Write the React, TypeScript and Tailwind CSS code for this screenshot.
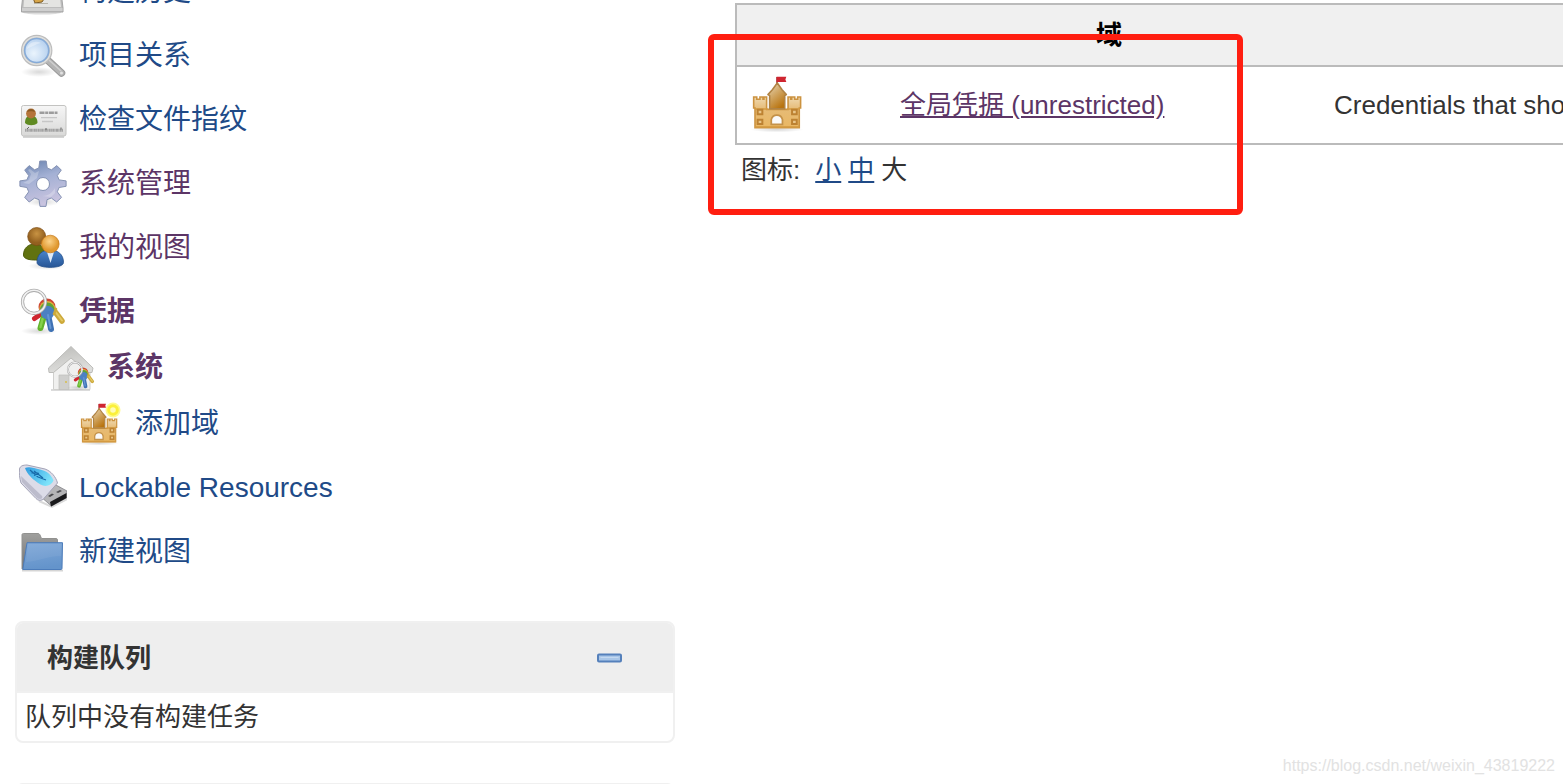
import type { ReactNode } from "react";

type Task = {
    id: number;
    title: string;
    icon: ReactNode;
    visited?: boolean;
    active?: boolean;
    children?: Task[];
};

function HistoryIcon() {
    return (
        <svg viewBox="0 0 48 48" className="h-12 w-12 shrink-0" aria-hidden="true">
            <ellipse cx="23" cy="44.500" rx="19" ry="2" fill="#dcdcdc" />
            <path d="M6 8h34l4 32v4H2.500v-4z" fill="#bdbdbd" stroke="#a5a5a5" />
            <path d="M7 10h32l3 29H4.500z" fill="#e4e4e2" />
            <path d="M3 41.500h40.500" stroke="#cfcfcf" strokeWidth="3" />
            <path d="M14 30l14-12 3 4-8 12-7 1z" fill="#d8a649" stroke="#7b5a25" />
            <path d="M15 35.500h14" stroke="#b7b4a9" />
        </svg>
    );
}

function SearchIcon() {
    return (
        <svg viewBox="0 0 48 48" className="h-12 w-12 shrink-0" aria-hidden="true">
            <defs>
                <radialGradient id="lens" cx="0.4" cy="0.6" r="0.65">
                    <stop offset="0" stopColor="#eaf4fd" />
                    <stop offset="1" stopColor="#aecbec" />
                </radialGradient>
                <radialGradient id="softShadow">
                    <stop offset="0" stopColor="#000" stopOpacity="0.150" />
                    <stop offset="1" stopColor="#000" stopOpacity="0" />
                </radialGradient>
            </defs>
            <ellipse cx="20" cy="40" rx="18" ry="5" fill="url(#softShadow)" />
            <path d="M29 28.500l13.500 12.500" stroke="#9a9a9a" strokeWidth="7.500" strokeLinecap="round" />
            <path d="M29 28.500l13.500 12.500" stroke="#b4b4b4" strokeWidth="5.500" strokeLinecap="round" />
            <path d="M30 28l12 11" stroke="#cfcfcf" strokeWidth="1.500" />
            <circle cx="42.500" cy="41" r="1.500" fill="#e2e2e2" />
            <circle cx="17.700" cy="18.500" r="14" fill="url(#lens)" stroke="#bdbdbd" strokeWidth="3.500" />
            <circle cx="17.700" cy="18.500" r="13.800" fill="none" stroke="#e0e0de" strokeWidth="1.500" />
            <circle cx="17.700" cy="18.500" r="12" fill="none" stroke="#86abd8" strokeWidth="1.600" />
            <path d="M8 17c1-6 8-9 14-6-5 1-10 4-14 6z" fill="#fff" opacity="0.350" />
        </svg>
    );
}

function CardIcon() {
    return (
        <svg viewBox="0 0 48 48" className="h-12 w-12 shrink-0" aria-hidden="true">
            <defs>
                <linearGradient id="card" x2="0" y2="1">
                    <stop offset="0" stopColor="#f6f6f6" />
                    <stop offset="1" stopColor="#d9d9d8" />
                </linearGradient>
            </defs>
            <path d="M4 41h41" stroke="#d5d5d5" strokeWidth="2" />
            <rect x="2.500" y="9.500" width="44.500" height="30.500" rx="2" fill="url(#card)" stroke="#c3c3c1" />
            <path d="M6 27c0-6 3-7.500 6-7.500s6.500 1.500 6.500 7.500c-3 3-9.500 3-12.500 0z" fill="#5f8a22" />
            <circle cx="12" cy="17.500" r="4.900" fill="#b5743a" />
            <path d="M8 16c1-4 7-4 8 0-2-1-6-1-8 0z" fill="#8a5a24" />
            <path d="M20.500 16.700h18" stroke="#9c9c9c" strokeWidth="2.400" strokeDasharray="5 0.700 3 0.700" />
            <path d="M22 21.700h16M23 25.500h11" stroke="#c6c6c6" strokeWidth="1.300" />
            <path d="M6 34.300h38" stroke="#a2a2a2" strokeWidth="3" strokeDasharray="1 0.400 2 0.300" />
            <path d="M8 33l2-2M27 32v2M42 31.500v2" stroke="#666" />
        </svg>
    );
}

function GearIcon() {
    return (
        <svg viewBox="0 0 48 48" className="h-12 w-12 shrink-0" aria-hidden="true">
            <defs>
                <linearGradient id="gear" x2="0.300" y2="1">
                    <stop offset="0" stopColor="#6680ac" />
                    <stop offset="0.450" stopColor="#a3b0d4" />
                    <stop offset="1" stopColor="#c8c3df" />
                </linearGradient>
            </defs>
            <ellipse cx="24" cy="42" rx="17" ry="4.500" fill="url(#softShadow)" />
            <path
                fillRule="evenodd"
                fill="url(#gear)"
                stroke="#8592b3"
                strokeLinejoin="round"
                d="M20.800 1h6.400l1 7 4.300 1.800 5.300-4.200 4.500 4.500-4 5.500 1.800 4.300 7 1v5.400l-7 1.200-1.800 4.300 4.200 5.600-4.800 4.600-5.400-4-4.300 1.700-1 6.700h-6l-1-6.700-4.300-1.700-5.500 4-4.500-4.600 4-5.600-1.800-4.300-7-1.200v-5.400l7-1 1.800-4.300-4-5.500L10.200 5.600l5.300 4.200L19.800 8zM24 17.500a6.500 6.500 0 1 0 0 13 6.500 6.500 0 0 0 0-13z"
            />
            <path d="M11 9l5 4 4-2-2 7-8 6-6-1 6-3 2-6-3-4zM36 28c-3 5-7 8-13 8l9 1 4-4z" fill="#fff" opacity="0.250" />
        </svg>
    );
}

function UsersIcon() {
    return (
        <svg viewBox="0 0 48 48" className="h-12 w-12 shrink-0" aria-hidden="true">
            <defs>
                <radialGradient id="brownHead" cx="0.500" cy="0.350">
                    <stop offset="0" stopColor="#c89343" />
                    <stop offset="1" stopColor="#93601f" />
                </radialGradient>
                <radialGradient id="orangeHead" cx="0.450" cy="0.350">
                    <stop offset="0" stopColor="#fbd38a" />
                    <stop offset="1" stopColor="#e0982f" />
                </radialGradient>
                <linearGradient id="blueBody" x2="0" y2="1">
                    <stop offset="0" stopColor="#4a86cd" />
                    <stop offset="1" stopColor="#275595" />
                </linearGradient>
            </defs>
            <ellipse cx="28" cy="42" rx="19" ry="4" fill="url(#softShadow)" />
            <path d="M4.500 31c0-7 5-11 11-11s12 4 12 11-5 5-11 5-12-1-12-5z" fill="#61720f" stroke="#4d5c0b" />
            <circle cx="17.700" cy="12.500" r="9" fill="url(#brownHead)" stroke="#7c4a11" strokeWidth="0.700" />
            <path d="M18 38.500c0-8 5-12.500 13-12.500S44.500 30.500 44.500 38.500c0 6.500-26.500 6.500-26.500 0z" fill="url(#blueBody)" stroke="#24508c" strokeWidth="0.800" />
            <path d="M28 28h7l-3.500 11z" fill="#dfeaf6" />
            <circle cx="31.300" cy="20" r="8.800" fill="url(#orangeHead)" stroke="#c47613" strokeWidth="0.700" />
        </svg>
    );
}

function KeyRing() {
    return (
        <g strokeLinecap="round" fill="none">
            <ellipse cx="20" cy="43" rx="18" ry="4" fill="url(#softShadow)" />
            <path d="M34 21l9 12" stroke="#cda93a" strokeWidth="5.500" />
            <path d="M35 22l8 10.500" stroke="#e3c763" strokeWidth="2" />
            <path d="M22 26l-6.500 4.500" stroke="#cf2630" strokeWidth="5" />
            <path d="M25 28l-3.500 12" stroke="#63b32b" strokeWidth="6" />
            <path d="M23.500 31l-2 8" stroke="#86d14b" strokeWidth="2.500" />
            <path d="M28.500 24l3.500 17" stroke="#3f72b4" strokeWidth="6" />
            <circle cx="28" cy="19" r="8.500" fill="#cd4634" />
            <circle cx="28.300" cy="21" r="8" fill="#dfb03c" />
            <circle cx="28.300" cy="22" r="7.500" fill="#5da336" />
            <circle cx="28.500" cy="24.500" r="6.800" fill="#4c80c2" />
            <path d="M29 27l2.500 13" stroke="#6596d3" strokeWidth="2" />
            <path d="M37 21l-2 5" stroke="#cda93a" strokeWidth="2.500" />
            <circle cx="15" cy="13.800" r="11.500" stroke="#aaaaaa" strokeWidth="3.200" />
            <circle cx="15" cy="13.800" r="11.500" stroke="#f1f1f1" strokeWidth="1.600" />
        </g>
    );
}

function KeysIcon() {
    return (
        <svg viewBox="0 0 48 48" className="h-12 w-12 shrink-0" aria-hidden="true">
            <KeyRing />
        </svg>
    );
}

function HouseIcon() {
    return (
        <svg viewBox="0 0 48 48" className="h-12 w-12 shrink-0" aria-hidden="true">
            <defs>
                <linearGradient id="roof" x2="0.300" y2="1">
                    <stop offset="0" stopColor="#bcbcb9" />
                    <stop offset="1" stopColor="#dededc" />
                </linearGradient>
            </defs>
            <path d="M4 46h39" stroke="#cfcfcf" strokeWidth="1.500" />
            <path d="M6.500 23L24 8l19 16v21.500H6.500z" fill="#f0f0ef" stroke="#d0d0ce" />
            <path d="M12 31h10v14.500H12z" fill="#cfcfcd" stroke="#bdbdbb" strokeWidth="0.700" />
            <path d="M24 2.500L46 24l-1 4.500h-4L24 14 6.500 28.500H2L1.500 24z" fill="url(#roof)" stroke="#bdbdba" strokeLinejoin="round" />
            <circle cx="19" cy="38" r="0.900" fill="#d8bd3c" />
            <g transform="translate(18.700 17) scale(0.620)">
                <KeyRing />
            </g>
        </svg>
    );
}

function Castle() {
    return (
        <g>
            <defs>
                <linearGradient id="keep" x2="0.600" y2="1">
                    <stop offset="0" stopColor="#e9dcc0" />
                    <stop offset="0.450" stopColor="#d3ab6c" />
                    <stop offset="1" stopColor="#b9740f" />
                </linearGradient>
                <linearGradient id="wall" x2="0" y2="1">
                    <stop offset="0" stopColor="#efd9b0" />
                    <stop offset="0.400" stopColor="#e6bb76" />
                    <stop offset="1" stopColor="#eab762" />
                </linearGradient>
            </defs>
            <ellipse cx="24" cy="42.500" rx="20" ry="2" fill="url(#softShadow)" />
            <path d="M24 9V3" stroke="#8e1b1b" />
            <path d="M23.700 2.800h7.300l-.7 2 .7 2h-7.300z" fill="#cf2530" />
            <path d="M6.500 18h2.300v1.700h2.400V18h2.300v1.700h.7V18h2v9.300h16.100V18h2v1.700H35V18h2.300v1.700h2.200V18h2.200v8.300h-1V41H7.500V26.300h-1z" fill="url(#wall)" stroke="#cc9340" strokeWidth="1.200" />
            <path d="M18.500 26.800V17l-1.300-.8 3.300-3.700L24.200 7.500l3.600 5 3.200 3.700-1.200.8v9.800z" fill="url(#keep)" stroke="#b08344" strokeWidth="1.200" strokeLinejoin="round" />
            <path d="M7.500 27h9.500M31.500 27H41M7.500 40.500h33.300" stroke="#d49a42" strokeWidth="1.300" />
            <path d="M19.700 38.500V35c1-4.500 7.400-4.500 8.400 0v3.500z" fill="#fafafa" stroke="#c4924a" strokeWidth="1.300" />
            <g fill="#e9c68a" stroke="#bd8232" strokeWidth="1.500">
                <path d="M9.500 27.600h3.500v3.300H9.500zM35.300 27.600h3.500v3.300h-3.500zM9.500 35h3.500v3.300H9.500zM35.300 35h3.500v3.300h-3.500z" />
            </g>
        </g>
    );
}

function CastleIcon() {
    return (
        <svg viewBox="0 0 48 48" className="h-16 w-16" aria-hidden="true">
            <Castle />
        </svg>
    );
}

function AddCastleIcon() {
    return (
        <svg viewBox="0 0 48 48" className="h-12 w-12 shrink-0" aria-hidden="true">
            <g transform="translate(0 1)">
                <Castle />
            </g>
            <circle cx="38" cy="10" r="7.500" fill="#fdf535" opacity="0.550" />
            <circle cx="38" cy="10" r="4.300" fill="#fffcb4" stroke="#fbf03a" strokeWidth="3" />
        </svg>
    );
}

function UsbIcon() {
    return (
        <svg viewBox="0 0 48 48" className="h-12 w-12 shrink-0" aria-hidden="true">
            <defs>
                <linearGradient id="label" x2="1" y2="0.500">
                    <stop offset="0" stopColor="#2d9adf" />
                    <stop offset="1" stopColor="#7ee3fa" />
                </linearGradient>
            </defs>
            <path d="M20 37l13 6 15-8" stroke="#000" strokeOpacity="0.150" strokeWidth="2" fill="none" />
            <path d="M22 33l15-12 11 6v6.500L32.500 42z" fill="#b4b4b6" stroke="#77777c" strokeWidth="0.700" />
            <path d="M31 38l16.500-9V34L32 42.500z" fill="#19191b" />
            <path d="M29 32l4-2.500 2 1-4 2.500zM37 28l4-2 2 1-4 2z" fill="#4b4b4f" />
            <path d="M0.500 5C1 2 4 1 8 1l18 4c6 2 11 8 12.500 14L24 35.500c-3 1.500-5 1-7-1L2 19C0.500 14 0 9 0.500 5z" fill="#dcdce8" stroke="#a3a3b7" />
            <path d="M2 12l21 20c1 1 0 3-2 3-2 0-3-1-4-2L3 18z" fill="#aeaec1" opacity="0.700" />
            <path d="M6 4c4-2 9 0 15 1.500 7 1.500 11 5 13.500 11-2 5-8 7-13 4C14 16 8 10 6 4z" fill="url(#label)" />
            <path d="M11 6l8 7M15 7l9 7M12.500 9h7M19 13l8 3M20 9.500l-5 2" stroke="#176aa9" strokeWidth="1.200" />
        </svg>
    );
}

function FolderIcon() {
    return (
        <svg viewBox="0 0 48 48" className="h-12 w-12 shrink-0" aria-hidden="true">
            <defs>
                <linearGradient id="folder" x2="0.200" y2="1">
                    <stop offset="0" stopColor="#80a8d8" />
                    <stop offset="1" stopColor="#6494cb" />
                </linearGradient>
                <linearGradient id="folderBack" x2="0" y2="1">
                    <stop offset="0" stopColor="#a0a09e" />
                    <stop offset="1" stopColor="#717171" />
                </linearGradient>
            </defs>
            <path d="M3 42.500h41" stroke="#d5d5d5" strokeWidth="2" />
            <path d="M3 41V7c0-1 .5-1.500 1.500-1.500H19c1 0 1.500.5 2 1.500l1.500 3.500H37c1 0 1.500.5 1.500 1.500v28z" fill="url(#folderBack)" stroke="#929290" />
            <path d="M8 14.700h35.500L43 40.500c0 .5-.5 1-1 1H3.800z" fill="url(#folder)" stroke="#4c7cba" strokeLinejoin="round" />
            <path d="M9 16h33.500l-.3 12C28 28 20 33 7 34z" fill="#fff" opacity="0.060" />
        </svg>
    );
}

const tasks: Task[] = [
    { id: 1, title: "构建历史", icon: <HistoryIcon /> },
    { id: 2, title: "项目关系", icon: <SearchIcon /> },
    { id: 3, title: "检查文件指纹", icon: <CardIcon /> },
    { id: 4, title: "系统管理", icon: <GearIcon />, visited: true },
    { id: 5, title: "我的视图", icon: <UsersIcon />, visited: true },
    {
        id: 6,
        title: "凭据",
        icon: <KeysIcon />,
        visited: true,
        active: true,
        children: [
            {
                id: 7,
                title: "系统",
                icon: <HouseIcon />,
                visited: true,
                active: true,
                children: [{ id: 8, title: "添加域", icon: <AddCastleIcon /> }],
            },
        ],
    },
    { id: 9, title: "Lockable Resources", icon: <UsbIcon /> },
    { id: 10, title: "新建视图", icon: <FolderIcon /> },
];

function TaskLink({ task }: { task: Task }) {
    const color = task.visited ? "text-[#5c3566]" : "text-[#204a87]";
    const weight = task.active ? "font-bold" : "font-normal";
    return (
        <>
            <a href="#" className={`flex h-14 items-center gap-3 text-[28px] leading-10 ${color} ${weight}`}>
                {task.icon}
                <span>{task.title}</span>
            </a>
            {task.children && (
                <ul className="pl-7">
                    {task.children.map((child) => (
                        <li key={child.id}>
                            <TaskLink task={child} />
                        </li>
                    ))}
                </ul>
            )}
        </>
    );
}

export default function App() {
    return (
        <div className="relative flex h-screen overflow-hidden bg-white font-['Liberation_Sans','Noto_Sans_CJK_SC',sans-serif] text-[26px] leading-9 text-[#333]">
            {/* Side panel, scrolled down by part of a row */}
            <aside className="-mt-10 w-[675px] shrink-0 pl-[15px]">
                <nav className="pl-1">
                    <ul>
                        {tasks.map((task) => (
                            <li key={task.id} className="py-1">
                                <TaskLink task={task} />
                            </li>
                        ))}
                    </ul>
                </nav>

                <section className="mt-[37px] rounded-lg border-2 border-[#f0f0f0]">
                    <header className="flex h-[70px] items-center justify-between rounded-t-md border-b-2 border-[#f0f0f0] bg-[#eee] pt-[2px] pr-[50px] pl-[30px]">
                        <h2 className="font-bold">构建队列</h2>
                        <button type="button" aria-label="collapse">
                            <svg viewBox="0 0 28 10" className="h-[10px] w-7" aria-hidden="true">
                                <rect x="3" y="1.500" width="23" height="7" rx="1" fill="#a9c6e8" stroke="#5580bb" strokeWidth="2" />
                                <path d="M5.500 4.500h18" stroke="#c3d8f0" />
                            </svg>
                        </button>
                    </header>
                    <p className="px-2 py-[6px]">队列中没有构建任务</p>
                </section>

                <section className="mt-10 h-20 rounded-lg border-2 border-[#f0f0f0] bg-[#eee]"></section>
            </aside>

            <main className="relative ml-[60px] min-w-0 flex-1 pt-[3px]">
                <table className="w-full table-fixed border-collapse">
                    <colgroup>
                        <col className="w-[164px]" />
                        <col className="w-[434px]" />
                        <col />
                    </colgroup>
                    <thead>
                        <tr className="h-[62px] border-2 border-r-0 border-[#bbb] bg-[#f0f0f0] text-black">
                            <th></th>
                            <th className="pr-4 font-bold">域</th>
                            <th></th>
                        </tr>
                    </thead>
                    <tbody>
                        <tr className="h-[78px] border-2 border-r-0 border-[#bbb]">
                            <td className="pl-2">
                                <CastleIcon />
                            </td>
                            <td>
                                <a href="#" className="text-[#5c3566] underline">全局凭据 (unrestricted)</a>
                            </td>
                            <td className="overflow-hidden whitespace-nowrap">Credentials that should</td>
                        </tr>
                    </tbody>
                </table>

                <div className="flex h-[50px] items-center gap-[7px] pl-[6px]">
                    <span className="pr-2">图标:</span>
                    <a href="#" className="text-[#204a87] underline">小</a>
                    <a href="#" className="text-[#204a87] underline">中</a>
                    <span>大</span>
                </div>

                {/* Highlight frame over the credentials row */}
                <div className="pointer-events-none absolute top-[34px] -left-[27px] h-[181px] w-[535px] rounded-md border-6 border-[#ff1e10]"></div>
            </main>

            <span className="absolute right-2 bottom-1 text-base leading-7 text-[#e2e2e2]">
                https://blog.csdn.net/weixin_43819222
            </span>
        </div>
    );
}
